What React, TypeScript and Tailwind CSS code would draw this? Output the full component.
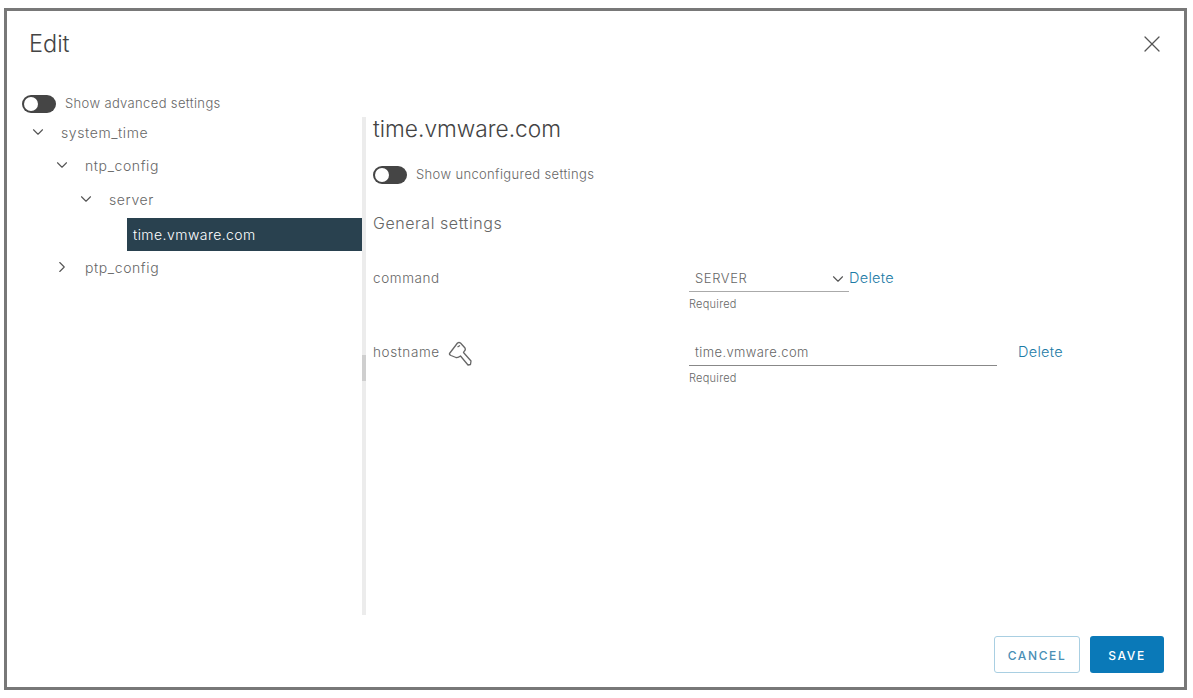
import { ChevronDown, ChevronRight, X } from 'lucide-react';

const FONT = "font-['Inter','Liberation_Sans',sans-serif]";

const Toggle = ({ label }: { label: string }) => (
  <div className="flex items-center gap-[9px]">
    <div className="flex h-[18px] w-[34px] items-center rounded-full bg-[#454545] p-[2px]">
      <div className="h-[14px] w-[14px] rounded-full bg-white" />
    </div>
    <span className="text-[13px] font-light tracking-[0.36px] text-[#666]">{label}</span>
  </div>
);

const TreeRow = ({
  label,
  indent,
  open = true,
}: {
  label: string;
  indent: string;
  open?: boolean;
}) => (
  <div className={`flex h-[34px] items-center gap-[14px] ${indent}`}>
    {open ? (
      <ChevronDown size={18} strokeWidth={1.5} className="text-[#555]" />
    ) : (
      <ChevronRight size={18} strokeWidth={1.5} className="text-[#555]" />
    )}
    <span className="text-[14px] font-light tracking-[0.6px] text-[#666]">{label}</span>
  </div>
);

const KeyIcon = () => (
  <svg width="24" height="26" viewBox="0 0 24 26" fill="none" stroke="#666" strokeWidth="1.3" strokeLinejoin="round" className="ml-[8px] -mt-[1px]">
    <path d="M1.5 12.5 L9.5 2 Q11 1 12.5 2 L17 7 Q18 9 16 10.5 L15.5 11.5 L23 20 L22.5 23.5 L20 24 L12.5 15 Q10 17 8 16.5 L3 14.5 Q1 13.5 1.5 12.5 Z" />
    <path d="M9.5 6 L12 4.5" />
  </svg>
);

export default function App() {
  return (
    <div className={`h-[698px] w-[1193px] bg-white pl-[4px] pt-[8px] ${FONT}`}>
      <div className="flex h-[682px] w-[1183px] flex-col border-[3px] border-[#787878]">
        <div className="flex h-[66px] items-center justify-between pl-[22px] pr-[18px]">
          <span className="text-[23.5px] font-light text-[#444]">Edit</span>
          <X size={28} strokeWidth={1.1} className="text-[#555]" />
        </div>
        <div className="mt-[18px] flex h-[18px] items-center pl-[15px]">
          <Toggle label="Show advanced settings" />
        </div>
        <div className="mt-[4px] flex h-[498px]">
          <div className="-mt-[2px] w-[355px]">
            <div className="-mb-[1px]">
              <TreeRow label="system_time" indent="pl-[22px]" />
            </div>
            <TreeRow label="ntp_config" indent="pl-[46px]" />
            <TreeRow label="server" indent="pl-[70px]" />
            <div className="mt-[2px] ml-[120px] flex h-[33px] items-center bg-[#29414f] pl-[6px] text-[14px] font-light tracking-[0.45px] text-white">
              time.vmware.com
            </div>
            <div className="-mt-[1px]">
              <TreeRow label="ptp_config" indent="pl-[46px]" open={false} />
            </div>
          </div>
          <div className="w-[4px] bg-[#ececec] pt-[238px]">
            <div className="h-[26px] w-[4px] bg-[#cfcfcf]" />
          </div>
          <div className="flex-1 pl-[7px]">
            <div className="flex h-[24px] items-center text-[22.7px] font-light text-[#444]">time.vmware.com</div>
            <div className="mt-[24px]">
              <Toggle label="Show unconfigured settings" />
            </div>
            <div className="mt-[26px] text-[16px] font-light tracking-[0.55px] text-[#666]">General settings</div>
            <div className="mt-[32px] flex h-[46px]">
              <div className="w-[316px] pt-[1px] text-[13.5px] font-light tracking-[0.6px] text-[#666]">command</div>
              <div>
                <div className="flex">
                  <div className="flex h-[25px] w-[160px] items-center justify-between border-b border-[#aaa] pl-[6px] pr-[2px] text-[13px] font-light tracking-[0.6px] text-[#666]">
                    SERVER
                    <ChevronDown size={18} strokeWidth={1.5} className="text-[#555]" />
                  </div>
                  <span className="h-[22px] text-[14.5px] leading-[22px] font-light tracking-[0.3px] text-[#1d7ba6]">Delete</span>
                </div>
                <div className="mt-[4px] text-[11px] font-light tracking-[0.25px] text-[#666]">Required</div>
              </div>
            </div>
            <div className="mt-[28px] flex h-[46px]">
              <div className="flex w-[316px] items-start pt-[1px] text-[13.5px] font-light tracking-[0.6px] text-[#666]">
                <span>hostname</span>
                <KeyIcon />
              </div>
              <div>
                <div className="flex">
                  <div className="flex h-[25px] w-[308px] items-center border-b border-[#888] pl-[6px] text-[13px] font-light tracking-[0.4px] text-[#666]">
                    time.vmware.com
                  </div>
                  <span className="ml-[21px] h-[22px] text-[14.5px] leading-[22px] font-light tracking-[0.3px] text-[#1d7ba6]">Delete</span>
                </div>
                <div className="mt-[4px] text-[11px] font-light tracking-[0.25px] text-[#666]">Required</div>
              </div>
            </div>
          </div>
        </div>
        <div className="mt-[21px] flex justify-end gap-[10px] pr-[20px]">
          <button type="button" className="h-[37px] w-[86px] rounded-[3px] border border-[#a9cfe2] bg-white pt-[3px] text-[12px] font-medium tracking-[1.6px] text-[#4a8fb5]">
            CANCEL
          </button>
          <button type="button" className="h-[37px] w-[74px] rounded-[3px] bg-[#0a79b8] pt-[3px] text-[12px] font-medium tracking-[1.6px] text-white">
            SAVE
          </button>
        </div>
      </div>
    </div>
  );
}
